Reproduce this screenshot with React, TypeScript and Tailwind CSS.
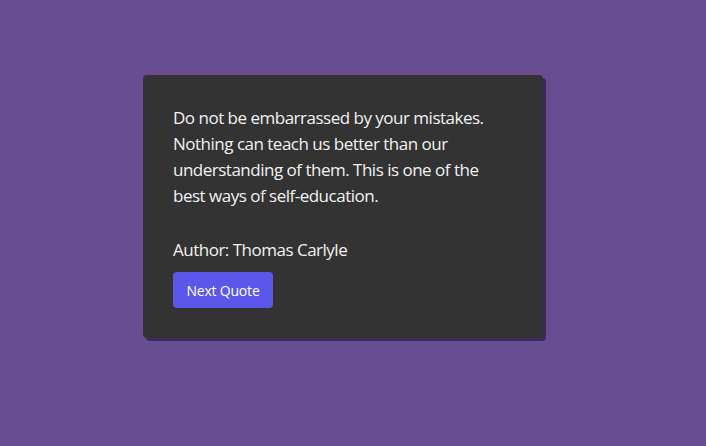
export default function App() {
  return (
    <div className="min-h-[446px] w-full bg-[#674d92] pt-[75px] font-['Open_Sans',sans-serif]">
      <div className="ml-[143px] w-[400px] rounded-[4px] bg-[#333333] px-[30px] pt-[30px] pb-[30px] text-[#f2f2f2] shadow-[3px_3px_0_#3d2a5c]">
        <p className="w-[320px] text-[17px] leading-[26px] tracking-[-0.5px]">
          Do not be embarrassed by your mistakes. Nothing can teach us better than our understanding of them. This is one of the best ways of self-education.
        </p>
        <p className="mt-[28px] text-[17px] leading-[26px] tracking-[-0.5px]">Author: Thomas Carlyle</p>
        <button className="mt-[9px] h-[36px] w-[100px] rounded-[4px] bg-[#5b57ea] text-[14px] tracking-[-0.2px] text-white">
          Next Quote
        </button>
      </div>
    </div>
  );
}
